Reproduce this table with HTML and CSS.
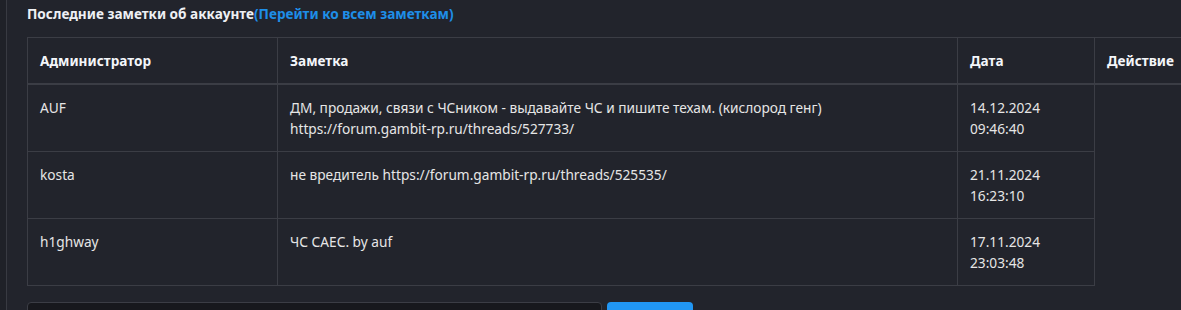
FILE: index.html
```html
<!DOCTYPE html>
<html lang="ru">
<head>
<meta charset="utf-8">
<title>Заметки</title>
<link rel="stylesheet" href="styles.css">
</head>
<body>
<div class="page">
  <div class="panel">
    <h3 class="title">Последние заметки об аккаунте<a class="title-link" href="#">(Перейти ко всем заметкам)</a></h3>
    <table class="notes">
      <thead>
        <tr>
          <th class="col-admin">Администратор</th>
          <th class="col-note">Заметка</th>
          <th class="col-date">Дата</th>
          <th class="col-action">Действие</th>
        </tr>
      </thead>
      <tbody>
        <tr>
          <td>AUF</td>
          <td>ДМ, продажи, связи с ЧСником - выдавайте ЧС и пишите техам. (кислород генг) <span class="url">https://forum.gambit-rp.ru/threads/527733/</span></td>
          <td>14.12.2024<br>09:46:40</td>
        </tr>
        <tr>
          <td>kosta</td>
          <td>не вредитель <span class="url">https://forum.gambit-rp.ru/threads/525535/</span></td>
          <td>21.11.2024<br>16:23:10</td>
        </tr>
        <tr>
          <td>h1ghway</td>
          <td>ЧС САЕС. by auf</td>
          <td>17.11.2024<br>23:03:48</td>
        </tr>
      </tbody>
    </table>
    <form class="add-form">
      <input class="add-input" type="text">
      <button class="add-btn" type="button">Добавить</button>
    </form>
  </div>
</div>
</body>
</html>
```

FILE: styles.css
```css
html, body {
  margin: 0;
  padding: 0;
  overflow: hidden;
  background: #1f2128;
}
.page {
  width: 1181px;
  height: 310px;
  overflow: hidden;
  padding-left: 6px;
  box-sizing: border-box;
}
.panel {
  border-left: 1px solid #383a42;
  background: #22242c;
  height: 100%;
  padding: 3px 0 0 20px;
  font-family: "Noto Sans", "Open Sans", sans-serif;
  font-size: 13.7px;
  color: #e6e6e6;
}
.title {
  margin: 0 0 13px 0;
  font-size: 13.6px;
  line-height: 21px;
  font-weight: 700;
  color: #eef0f4;
  white-space: nowrap;
}
.title-link {
  color: #1e8ee8;
  text-decoration: none;
}
.notes {
  border-collapse: collapse;
  width: 1240px;
  table-layout: fixed;
}
.notes th,
.notes td {
  box-sizing: border-box;
  border: 1px solid #3b3d45;
  padding: 12px 12px;
  text-align: left;
  vertical-align: top;
  line-height: 21px;
}
.col-admin { width: 250px; }
.col-note { width: 680px; }
.col-date { width: 137px; }
.col-action { width: 173px; }
.notes th {
  font-weight: 700;
  font-size: 13.6px;
  color: #f4f6fa;
  border-bottom-width: 2px;
  white-space: nowrap;
}
.notes td {
  height: 67px;
}
.url {
  white-space: nowrap;
}
.add-form {
  display: flex;
  gap: 5px;
  margin-top: 16px;
}
.add-input {
  width: 575px;
  height: 34px;
  box-sizing: border-box;
  background: #17181d;
  border: 1px solid #3b3d45;
  border-radius: 4px;
}
.add-btn {
  width: 86px;
  height: 34px;
  background: #2196f3;
  border: none;
  border-radius: 4px;
  color: #fff;
  font-family: inherit;
  font-size: 13px;
}
```
